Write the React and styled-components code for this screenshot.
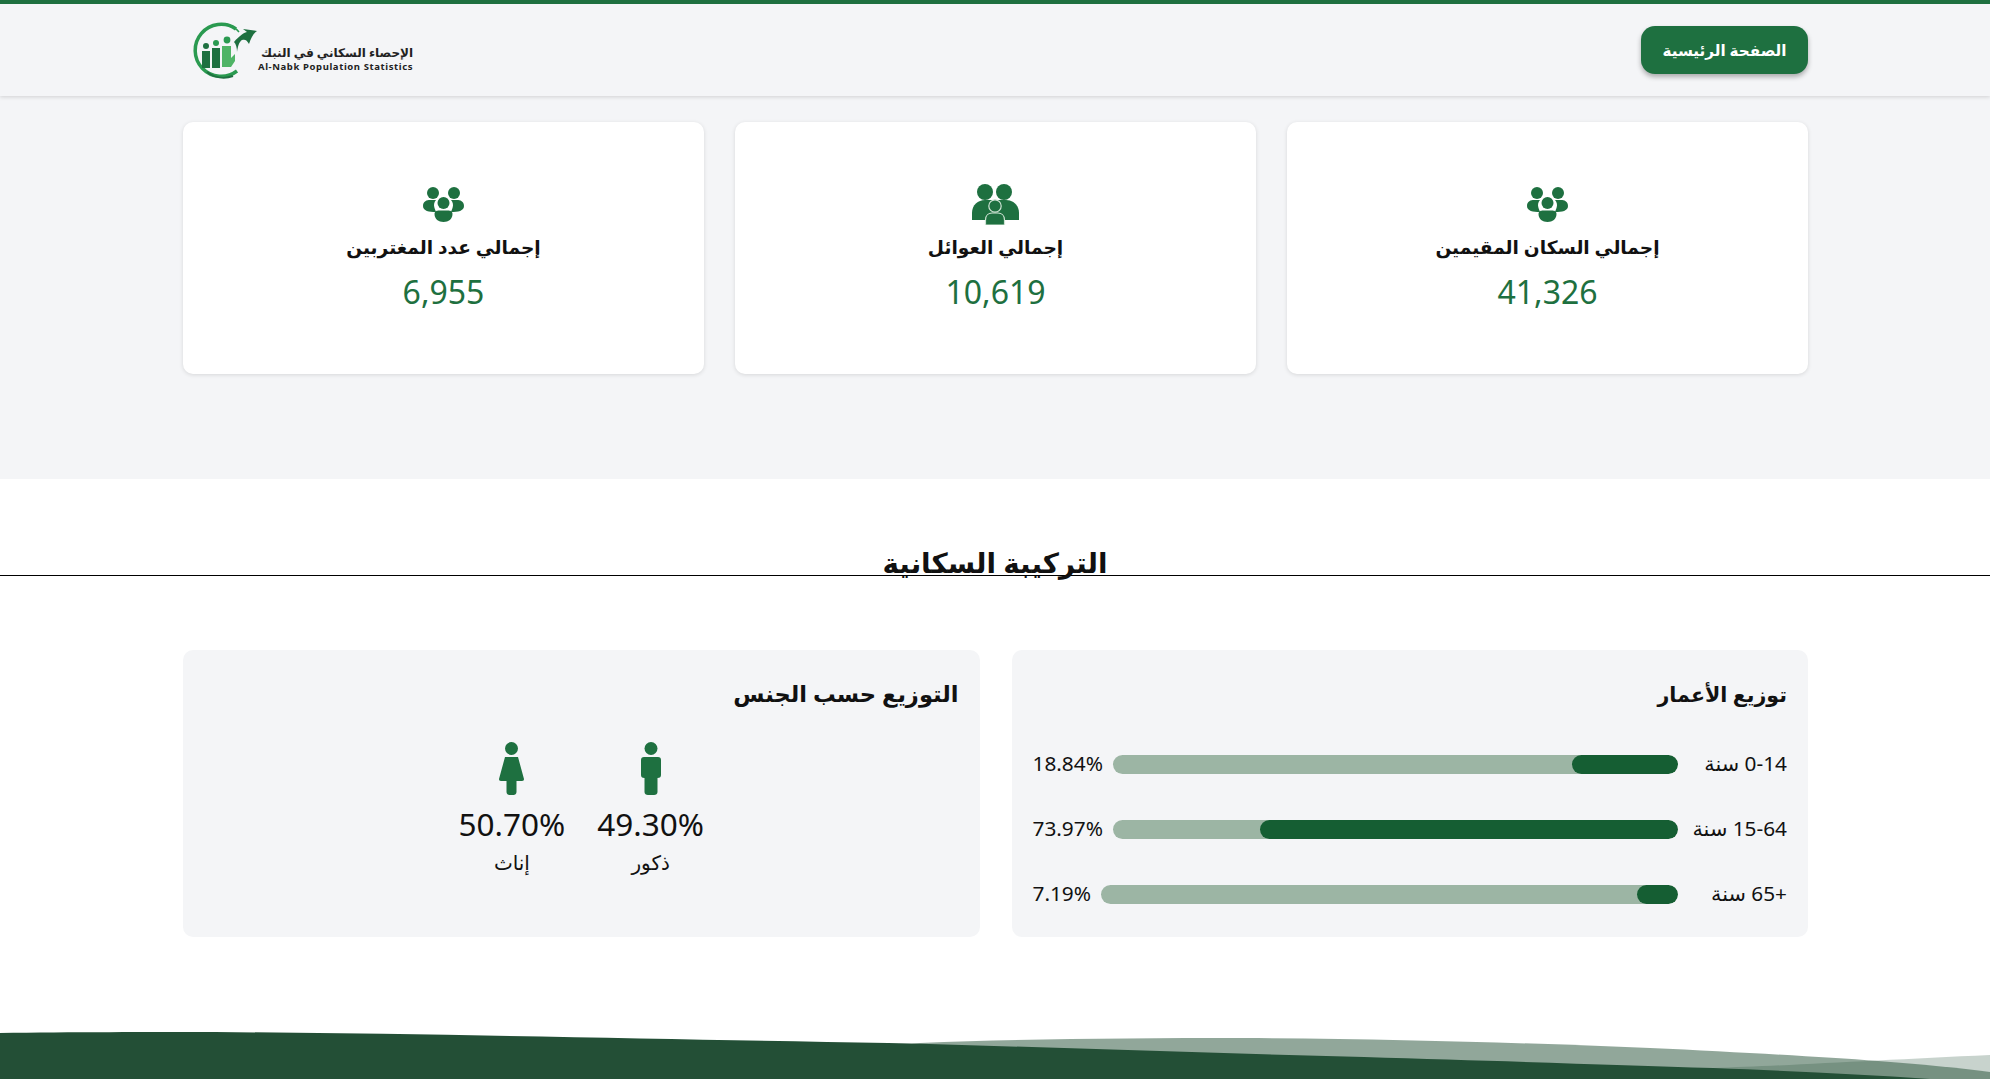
import styled, { createGlobalStyle } from "styled-components";

const GlobalStyle = createGlobalStyle`
  * { box-sizing: border-box; }
  html, body { margin: 0; padding: 0; background: #fff; }
  body { font-family: "Noto Sans", "DejaVu Sans", sans-serif; color: #111; }
`;

const Page = styled.div`
  min-height: 1079px;
  display: flex;
  flex-direction: column;
  overflow: hidden;
`;

const Header = styled.header`
  height: 96px;
  border-top: 4px solid #1e7040;
  background: #f4f5f7;
  box-shadow: 0 1px 4px rgba(0, 0, 0, 0.15);
  padding: 0 182px 0 183px;
  display: flex;
  align-items: center;
  justify-content: space-between;
  position: relative;
`;

const HomeButton = styled.a`
  width: 167px;
  height: 48px;
  border-radius: 14px;
  background: #1e7040;
  color: #fff;
  font-size: 15.2px;
  font-weight: 700;
  display: flex;
  align-items: center;
  justify-content: center;
  box-shadow: 0 3px 5px rgba(0, 0, 0, 0.3);
`;

const Logo = styled.div`
  display: flex;
  align-items: center;
  direction: ltr;
  margin-left: 6px;
`;

const LogoText = styled.div`
  margin-left: 1px;
  margin-top: 18px;
  text-align: right;
  line-height: 1;
  color: #222;
`;

const LogoArabic = styled.div`
  font-size: 12px;
  font-weight: 700;
`;

const LogoLatin = styled.div`
  font-size: 9.5px;
  font-weight: 700;
  letter-spacing: 0.6px;
  margin-top: 3px;
`;

const StatsSection = styled.section`
  height: 383px;
  background: #f4f5f7;
  padding: 26px 182px 0 183px;
`;

const CardGrid = styled.div`
  display: grid;
  grid-template-columns: repeat(3, 1fr);
  gap: 31px;
`;

const Card = styled.div`
  height: 252px;
  background: #fff;
  border-radius: 10px;
  box-shadow: 0 1px 4px rgba(0, 0, 0, 0.12);
  display: flex;
  flex-direction: column;
  align-items: center;
  padding-top: 61px;
`;

const IconSlot = styled.div`
  height: 43px;
  display: flex;
  align-items: center;
  justify-content: center;
  color: #1e7040;
`;

const CardTitle = styled.div`
  font-size: 18.6px;
  font-weight: 700;
  line-height: 30px;
  margin-top: 6px;
`;

const CardValue = styled.div`
  font-size: 32px;
  line-height: 44px;
  margin-top: 8px;
  color: #1e7040;
`;

const Composition = styled.section`
  flex: 1;
  padding-top: 64px;
`;

const SectionTitle = styled.h2`
  margin: 0;
  height: 33px;
  line-height: 38px;
  text-align: center;
  font-size: 27.8px;
  font-weight: 700;
  color: #111;
  border-bottom: 1px solid #000;
`;

const PanelGrid = styled.div`
  display: grid;
  grid-template-columns: repeat(2, 1fr);
  gap: 32px;
  padding: 74px 182px 0 183px;
`;

const Panel = styled.div`
  height: 287px;
  background: #f4f5f7;
  border-radius: 10px;
  padding: 26px 21px 0;
`;

const PanelTitle = styled.h3`
  margin: 0;
  font-size: ${(p) => p.$size}px;
  font-weight: 700;
  line-height: 36px;
`;

const Rows = styled.div`
  margin-top: 36px;
  display: flex;
  flex-direction: column;
  gap: 36px;
`;

const Row = styled.div`
  height: 29px;
  display: flex;
  align-items: center;
  gap: 10px;
  font-size: 20.8px;
`;

const RowLabel = styled.span`
  width: 99px;
  flex-shrink: 0;
  white-space: nowrap;
`;

const Track = styled.div`
  flex: 1;
  height: 19px;
  margin-top: 3px;
  border-radius: 10px;
  background: #9cb5a4;
  overflow: hidden;
`;

const Fill = styled.div`
  height: 100%;
  border-radius: 10px;
  background: #155e33;
`;

const GenderRow = styled.div`
  display: flex;
  justify-content: center;
  gap: 32px;
  margin-top: 30px;
`;

const Gender = styled.div`
  display: flex;
  flex-direction: column;
  align-items: center;
  color: #1e7040;
`;

const GenderValue = styled.div`
  font-size: 31.5px;
  line-height: 44px;
  margin-top: 7px;
  color: #111;
`;

const GenderLabel = styled.div`
  font-size: 20px;
  line-height: 30px;
  margin-top: 2px;
  color: #111;
`;

const WaveBox = styled.svg`
  display: block;
  width: 100%;
  height: 49px;
  margin-top: auto;
`;

const LogoMark = () => (
  <svg width="68" height="60" viewBox="0 0 68 60">
    <path d="M47 9 A26 26 0 1 0 48 51" fill="none" stroke="#2a9a50" strokeWidth="3.5" />
    <path d="M38 4 A26 26 0 0 1 50 12" fill="none" stroke="#2a9a50" strokeWidth="1.5" />
    <path d="M44 56 A27 27 0 0 1 18 52" fill="none" stroke="#1e7040" strokeWidth="2" />
    <path d="M45 22 C50 16 56 12 58 12 L54 9 L68 11 C64 14 62 18 60 24 C58 20 56 19 53 20 C50 22 49 26 48 32 C48 28 47 24 45 22 Z" fill="#1e7040" />
    <circle cx="17" cy="26" r="3" fill="#1e7040" />
    <circle cx="27" cy="23" r="3" fill="#2a9a50" />
    <circle cx="38" cy="20" r="3.4" fill="#2a9a50" />
    <rect x="13" y="31" width="8" height="17" fill="#1e7040" />
    <rect x="23" y="28" width="8" height="20" fill="#1e7040" />
    <path d="M33 26 H42 V38 L46 34 V41 L42 47 H33 Z" fill="#4fb466" />
  </svg>
);

const GroupIcon = () => (
  <svg width="41" height="35" viewBox="0 0 41 35" fill="currentColor">
    <circle cx="10" cy="6" r="6" />
    <circle cx="31" cy="6" r="6" />
    <path d="M0 19 C0 14 4 13 7 13 H13 C11 15 10.5 18 11.5 21 L13 25 C6 25 0 24 0 19 Z" />
    <path d="M41 19 C41 14 37 13 34 13 H28 C30 15 30.5 18 29.5 21 L28 25 C35 25 41 24 41 19 Z" />
    <circle cx="20.5" cy="16" r="6" />
    <path d="M11.5 27 C11.5 24 14 23.5 16 23.5 H25 C27 23.5 29.5 24 29.5 27 C29.5 32 25.5 35 20.5 35 C15.5 35 11.5 32 11.5 27 Z" />
  </svg>
);

const FamilyIcon = () => (
  <svg width="47" height="41" viewBox="0 0 47 41">
    <g fill="currentColor">
      <circle cx="13" cy="8" r="8" />
      <circle cx="32" cy="8" r="8" />
      <path d="M0 36 V29 C0 21 6 16 13 16 H34 C41 16 47 21 47 29 V36 Z" />
    </g>
    <circle cx="23" cy="22" r="6.2" fill="currentColor" stroke="#cfe3d4" strokeWidth="1.2" />
    <path d="M13.5 41 V36 C13.5 31 17 29 20 29 H26 C29 29 32.5 31 32.5 36 V41 Z" fill="currentColor" stroke="#cfe3d4" strokeWidth="1.2" />
  </svg>
);

const MaleIcon = () => (
  <svg width="20" height="53" viewBox="0 0 20 53" fill="currentColor">
    <circle cx="10" cy="6.5" r="6.5" />
    <path d="M3 15 H17 C19 15 20 16 20 18 V33 C20 35 19 36 16.5 36 V50 C16.5 52 15 53 13 53 H7 C5 53 3.5 52 3.5 50 V36 C1 36 0 35 0 33 V18 C0 16 1 15 3 15 Z" />
  </svg>
);

const FemaleIcon = () => (
  <svg width="25" height="53" viewBox="0 0 25 53" fill="currentColor">
    <circle cx="12.5" cy="6.5" r="6.5" />
    <path d="M6 15 H19 L25 37 C25 38 24.5 39 23 39 H17.5 V50 C17.5 52 16 53 14.5 53 H10.5 C9 53 7.5 52 7.5 50 V39 H2 C0.5 39 0 38 0 37 Z" />
  </svg>
);

const stats = [
  { title: "إجمالي السكان المقيمين", value: "41,326", icon: <GroupIcon /> },
  { title: "إجمالي العوائل", value: "10,619", icon: <FamilyIcon /> },
  { title: "إجمالي عدد المغتربين", value: "6,955", icon: <GroupIcon /> },
];

const ages = [
  { label: "0-14 سنة", pct: 18.84 },
  { label: "15-64 سنة", pct: 73.97 },
  { label: "+65 سنة", pct: 7.19 },
];

const App = () => {
  return (
    <Page dir="rtl">
      <GlobalStyle />
      <Header>
        <HomeButton>الصفحة الرئيسية</HomeButton>
        <Logo>
          <LogoMark />
          <LogoText>
            <LogoArabic>الإحصاء السكاني في النبك</LogoArabic>
            <LogoLatin>Al-Nabk Population Statistics</LogoLatin>
          </LogoText>
        </Logo>
      </Header>

      <StatsSection>
        <CardGrid>
          {stats.map((s) => (
            <Card key={s.title}>
              <IconSlot>{s.icon}</IconSlot>
              <CardTitle>{s.title}</CardTitle>
              <CardValue>{s.value}</CardValue>
            </Card>
          ))}
        </CardGrid>
      </StatsSection>

      <Composition>
        <SectionTitle>التركيبة السكانية</SectionTitle>
        <PanelGrid>
          <Panel>
            <PanelTitle $size={20.6}>توزيع الأعمار</PanelTitle>
            <Rows>
              {ages.map((a) => (
                <Row key={a.label}>
                  <RowLabel>{a.label}</RowLabel>
                  <Track>
                    <Fill style={{ width: `${a.pct}%` }} />
                  </Track>
                  <span>{a.pct.toFixed(2)}%</span>
                </Row>
              ))}
            </Rows>
          </Panel>
          <Panel>
            <PanelTitle $size={22.6}>التوزيع حسب الجنس</PanelTitle>
            <GenderRow>
              <Gender>
                <MaleIcon />
                <GenderValue>49.30%</GenderValue>
                <GenderLabel>ذكور</GenderLabel>
              </Gender>
              <Gender>
                <FemaleIcon />
                <GenderValue>50.70%</GenderValue>
                <GenderLabel>إناث</GenderLabel>
              </Gender>
            </GenderRow>
          </Panel>
        </PanelGrid>
      </Composition>

      <WaveBox viewBox="0 0 1990 49" preserveAspectRatio="none">
        <path d="M1713 38 C1780 36 1880 30 1990 25 V49 H1713 Z" fill="#234f36" opacity="0.25" />
        <path d="M860 20 L920 13 C1020 9 1130 8 1243 8 C1400 9 1530 13 1650 18 C1740 22 1820 27 1878 31 C1920 34 1960 38 1990 42 V49 H860 Z" fill="#234f36" opacity="0.5" />
        <path d="M0 3 C70 2 150 2 215 2 C450 4 700 10 888 13 C1050 17 1200 23 1364 27 C1500 31 1620 35 1713 38 C1790 41 1860 44 1930 49 H0 Z" fill="#234f36" />
      </WaveBox>
    </Page>
  );
};

export default App;
